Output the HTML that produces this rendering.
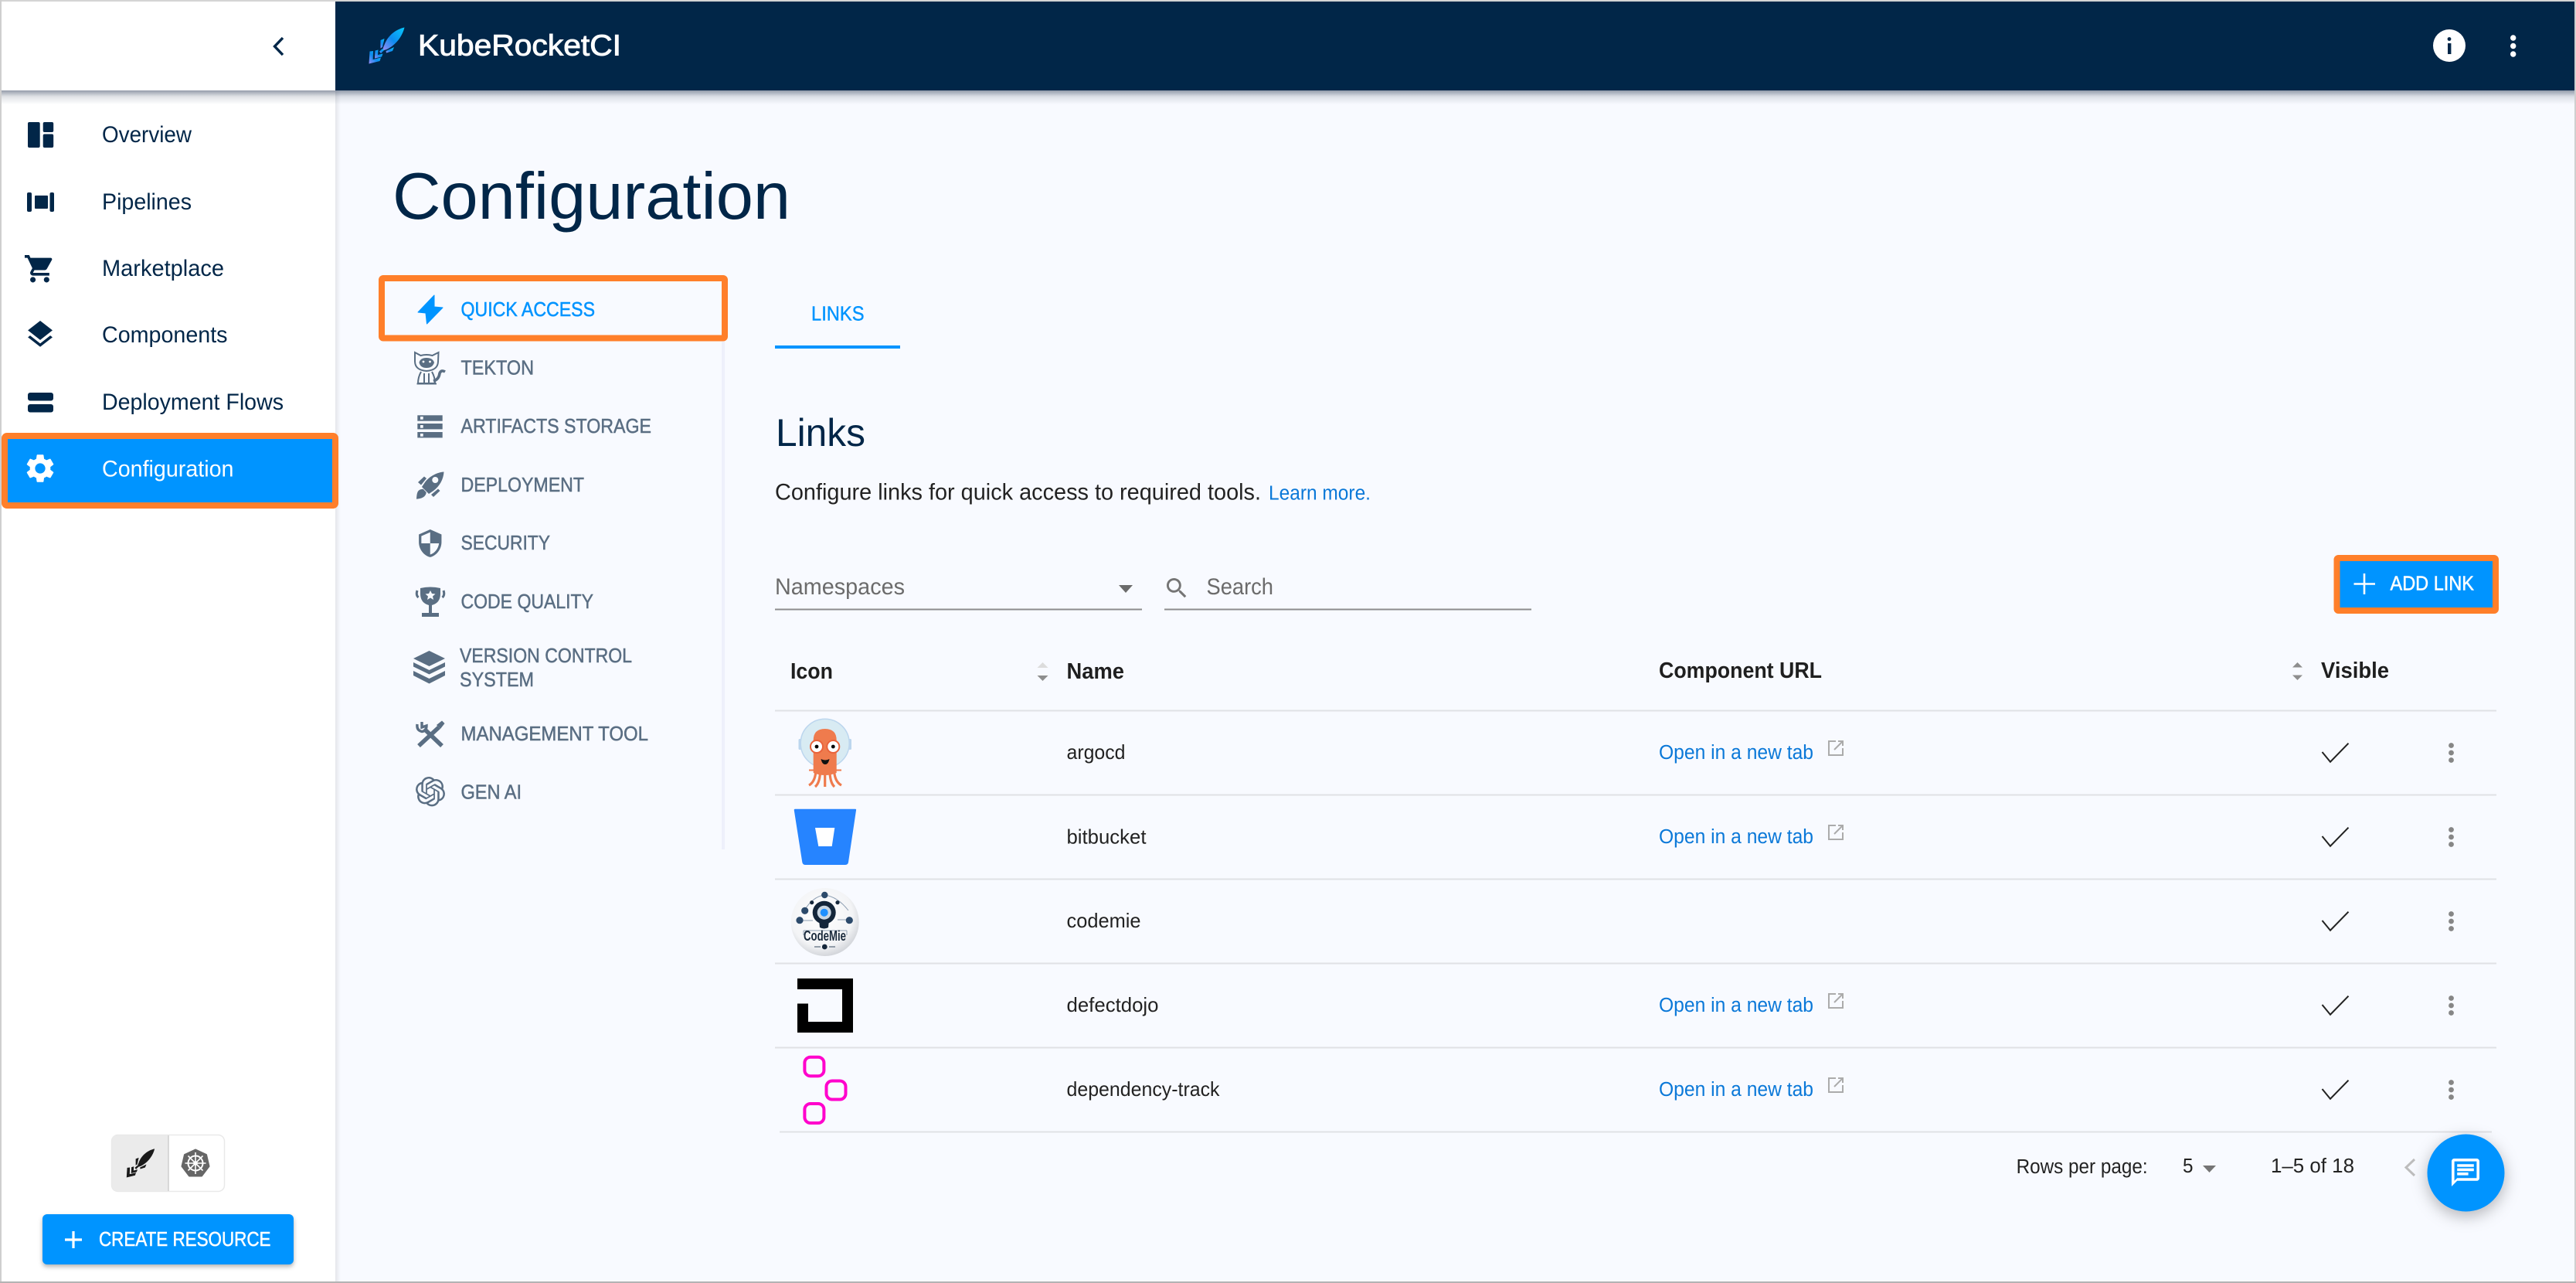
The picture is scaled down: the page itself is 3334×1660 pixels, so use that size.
<!DOCTYPE html>
<html lang="en">
<head>
<meta charset="utf-8">
<title>Configuration - KubeRocketCI</title>
<style>
html,body{margin:0;padding:0;width:3334px;height:1660px;overflow:hidden;background:#f8faff}
svg{display:block}
text{font-family:"Liberation Sans",sans-serif;white-space:pre}
.nav{font-size:29.8px;fill:#012648}
.sub{font-size:25.5px;fill:#5a6e83;stroke:#5a6e83;stroke-width:.5px}
.th{font-size:29px;font-weight:700;fill:#1f1f1f}
.td{font-size:26px;fill:#222}
.lnk{font-size:25.5px;fill:#0a78d8}
.pg{font-size:25.5px;fill:#222}
.btn{font-size:25.5px;fill:#fff;stroke:#fff;stroke-width:.5px}
.ic{fill:#5a6e83}
</style>
</head>
<body>
<svg xmlns="http://www.w3.org/2000/svg" width="3334" height="1660" viewBox="0 0 3334 1660">
<defs>
<linearGradient id="hs" x1="0" y1="0" x2="0" y2="1"><stop offset="0" stop-color="#2a3a55" stop-opacity=".5"/><stop offset=".45" stop-color="#2a3a55" stop-opacity=".14"/><stop offset="1" stop-color="#2a3a55" stop-opacity="0"/></linearGradient>
<linearGradient id="ss" x1="0" y1="0" x2="1" y2="0"><stop offset="0" stop-color="#000" stop-opacity=".08"/><stop offset="1" stop-color="#000" stop-opacity="0"/></linearGradient>
<linearGradient id="lg" x1="1" y1="0" x2="0" y2="1"><stop offset="0" stop-color="#08c8fb"/><stop offset=".55" stop-color="#0d8cf0"/><stop offset="1" stop-color="#9b8cf5"/></linearGradient>
<radialGradient id="cm" cx=".45" cy=".4" r=".65"><stop offset="0" stop-color="#fff"/><stop offset=".7" stop-color="#f3f4f6"/><stop offset="1" stop-color="#c9ccd2"/></radialGradient>
</defs>

<rect width="3334" height="1660" fill="#f8faff"/>

<!-- sidebar -->
<rect x="2" y="2" width="432" height="1656" fill="#fff"/>
<rect x="434" y="117" width="7" height="1541" fill="url(#ss)"/>
<!-- header shadow -->
<rect x="2" y="117" width="3330" height="18" fill="url(#hs)"/>
<!-- header -->
<rect x="2" y="2" width="432" height="115" fill="#fff"/>
<rect x="434" y="2" width="2898" height="115" fill="#012648"/>
<path d="M366 49 L355.5 60 L366 71" fill="none" stroke="#012648" stroke-width="3.4"/>

<!-- logo -->
<g fill="url(#lg)">
<path d="M523.5 35.5 C512 38 502 46 497.5 58 C496 61 495.5 63 495.5 65 C498 65 501 64 504 62 C514 56 521 46 523.5 35.5 Z"/>
<path d="M492.5 52 L497.5 50 L495 61 L492.5 62.5 Z"/>
<path d="M499.5 66 L510 61 L508 66 L500 68.5 Z"/>
<path d="M478.5 66.5 L483 66 L482.6 77 L493 74.5 L491.5 79 L477.5 82.5 Z"/>
<path d="M485.5 65.5 L489.5 64.5 L489 71 L495.5 69.5 L494 73.5 L485 75.5 Z"/>
<path d="M491 66.5 L495 63 L497 65 L493 69 Z"/>
</g>
<text x="541" y="71.5" font-size="38" fill="#fff" stroke="#fff" stroke-width=".9" textLength="263" lengthAdjust="spacingAndGlyphs">KubeRocketCI</text>

<!-- header right -->
<circle cx="3170" cy="59" r="21" fill="#fff"/>
<circle cx="3170" cy="50.5" r="2.4" fill="#012648"/>
<rect x="3168" y="56" width="4.4" height="14" fill="#012648"/>
<circle cx="3252.7" cy="49" r="3.7" fill="#fff"/><circle cx="3252.7" cy="59.5" r="3.7" fill="#fff"/><circle cx="3252.7" cy="70" r="3.7" fill="#fff"/>

<!-- sidebar nav icons -->
<g fill="#012648">
<rect x="36" y="158" width="15.7" height="33" rx="2"/><rect x="55.7" y="158" width="13.5" height="13" rx="2"/><rect x="55.7" y="173.5" width="13.5" height="17.5" rx="2"/>
<rect x="35" y="249" width="6" height="25" rx="2"/><rect x="45" y="253" width="17" height="17" rx="1"/><rect x="64.5" y="249" width="5.5" height="25" rx="2"/>
<path transform="translate(30.2 326.5) scale(1.77)" d="M7 18c-1.1 0-1.99.9-1.99 2S5.9 22 7 22s2-.9 2-2-.9-2-2-2zM1 2v2h2l3.6 7.59-1.35 2.45c-.16.28-.25.61-.25.96 0 1.1.9 2 2 2h12v-2H7.42c-.14 0-.25-.11-.25-.25l.03-.12.9-1.63h7.45c.75 0 1.41-.41 1.75-1.03l3.58-6.49c.08-.14.12-.31.12-.48 0-.55-.45-1-1-1H5.21l-.94-2H1zm16 16c-1.1 0-1.99.9-1.99 2s.89 2 1.99 2 2-.9 2-2-.9-2-2-2z"/>
<path transform="translate(30.8 411.5) scale(1.77)" d="M11.99 18.54l-7.37-5.73L3 14.07l9 7 9-7-1.63-1.27-7.38 5.74zM12 16l7.36-5.73L21 9l-9-7-9 7 1.63 1.27L12 16z"/>
<rect x="36" y="508" width="33" height="10.5" rx="3"/><rect x="36" y="523" width="33" height="10.5" rx="3"/>
</g>
<text class="nav" x="132" y="184" textLength="116" lengthAdjust="spacingAndGlyphs">Overview</text>
<text class="nav" x="132" y="271" textLength="116" lengthAdjust="spacingAndGlyphs">Pipelines</text>
<text class="nav" x="132" y="357" textLength="158" lengthAdjust="spacingAndGlyphs">Marketplace</text>
<text class="nav" x="132" y="443" textLength="162.5" lengthAdjust="spacingAndGlyphs">Components</text>
<text class="nav" x="132" y="530" textLength="235" lengthAdjust="spacingAndGlyphs">Deployment Flows</text>

<!-- selected config -->
<rect x="6" y="564" width="428" height="90" rx="3" fill="#0094ff" stroke="#ff7f2a" stroke-width="8"/>
<path transform="translate(29.8 583.8) scale(1.85)" fill="#fff" d="M19.14 12.94c.04-.3.06-.61.06-.94 0-.32-.02-.64-.07-.94l2.03-1.58c.18-.14.23-.41.12-.61l-1.92-3.32c-.12-.22-.37-.29-.59-.22l-2.39.96c-.5-.38-1.03-.7-1.62-.94l-.36-2.54c-.04-.24-.24-.41-.48-.41h-3.84c-.24 0-.43.17-.47.41l-.36 2.54c-.59.24-1.13.57-1.62.94l-2.39-.96c-.22-.08-.47 0-.59.22L2.74 8.87c-.12.21-.08.47.12.61l2.03 1.58c-.05.3-.09.63-.09.94s.02.64.07.94l-2.03 1.58c-.18.14-.23.41-.12.61l1.92 3.32c.12.22.37.29.59.22l2.39-.96c.5.38 1.03.7 1.62.94l.36 2.54c.05.24.24.41.48.41h3.84c.24 0 .44-.17.47-.41l.36-2.54c.59-.24 1.13-.56 1.62-.94l2.39.96c.22.08.47 0 .59-.22l1.92-3.32c.12-.22.07-.47-.12-.61l-2.01-1.58zM12 15.6c-1.98 0-3.6-1.62-3.6-3.6s1.62-3.6 3.6-3.6 3.6 1.62 3.6 3.6-1.62 3.6-3.6 3.6z"/>
<text class="nav" x="132" y="616.5" style="fill:#fff" textLength="170.5" lengthAdjust="spacingAndGlyphs">Configuration</text>

<!-- env toggle -->
<rect x="144.5" y="1468.5" width="146" height="73" rx="8" fill="#fff" stroke="#e9e9e9" stroke-width="1.5"/>
<path d="M152 1469 H218 V1541 H152 Q145 1541 145 1534 V1476 Q145 1469 152 1469 Z" fill="#ebebeb"/>
<path d="M218 1469 V1541" stroke="#cfcfcf" stroke-width="1.5"/>
<g transform="translate(163 1486) scale(.79) translate(-476.5 -35)" fill="#1a1a1a">
<path d="M523.5 35.5 C512 38 502 46 497.5 58 C496 61 495.5 63 495.5 65 C498 65 501 64 504 62 C514 56 521 46 523.5 35.5 Z"/>
<path d="M492.5 52 L497.5 50 L495 61 L492.5 62.5 Z"/>
<path d="M499.5 66 L510 61 L508 66 L500 68.5 Z"/>
<path d="M478.5 66.5 L483 66 L482.6 77 L493 74.5 L491.5 79 L477.5 82.5 Z"/>
<path d="M485.5 65.5 L489.5 64.5 L489 71 L495.5 69.5 L494 73.5 L485 75.5 Z"/>
<path d="M491 66.5 L495 63 L497 65 L493 69 Z"/>
</g>
<polygon points="253,1487.5 267,1494 270.5,1509 261,1521.5 245,1521.5 235.5,1509 239,1494" fill="#666" stroke="#666" stroke-width="2" stroke-linejoin="round"/>
<g stroke="#fff" fill="none">
<circle cx="253" cy="1505" r="9.5" stroke-width="2"/>
<path stroke-width="1.6" d="M253 1491 V1519 M239.5 1505 H266.5 M243.5 1495.5 L262.5 1514.5 M262.5 1495.5 L243.5 1514.5"/>
</g>
<circle cx="253" cy="1505" r="2.8" fill="#fff"/>

<!-- create resource -->
<rect x="55" y="1571" width="325" height="65" rx="6" fill="#0094ff" style="filter:drop-shadow(0 3px 3px rgba(0,0,0,.3))"/>
<path d="M84 1604 H106 M95 1593 V1615" stroke="#fff" stroke-width="3.2"/>
<text class="btn" x="128" y="1612" textLength="222.5" lengthAdjust="spacingAndGlyphs">CREATE RESOURCE</text>

<!-- page title -->
<text x="508" y="283" font-size="85" fill="#012648" textLength="515" lengthAdjust="spacingAndGlyphs">Configuration</text>

<!-- sub nav -->
<rect x="934" y="442" width="4" height="657" fill="#eef0fb"/>
<rect x="494" y="360" width="444" height="77.5" rx="2" fill="none" stroke="#ff7f2a" stroke-width="8"/>
<path d="M562 382 L541 404 L551 405 L552.5 419 L573 398 L562 397 Z" fill="#0094ff" stroke="#0094ff" stroke-width="1" stroke-linejoin="round"/>
<text class="sub" x="596.5" y="409" style="fill:#0094ff;stroke:#0094ff" textLength="173.5" lengthAdjust="spacingAndGlyphs">QUICK ACCESS</text>

<!-- tekton cat -->
<g fill="none" stroke="#5a6e83" stroke-width="2">
<path d="M537 456 L544.5 460 Q552 458 559.5 460 L567.5 456 L567 468 Q566.5 479 552 480 Q537.5 479 537 468 Z"/>
<path d="M559 481 Q563 488 563 496 H541 Q541 488 545 481"/>
<path d="M539.5 496.5 H565 M549 483 V496 M555 483 V496"/>
<path d="M561 493 Q568 491 569 483 Q571 478 576 481" stroke-width="3.6"/>
</g>
<path d="M542.5 469 Q544 463 552 463 Q560 463 562 469 Q560 476 552 476 Q544 476 542.5 469 Z" fill="#5a6e83"/>
<circle cx="548" cy="468" r="1.4" fill="#fff"/><circle cx="556.5" cy="468" r="1.4" fill="#fff"/>
<text class="sub" x="596.5" y="484.5" textLength="94.5" lengthAdjust="spacingAndGlyphs">TEKTON</text>

<!-- artifacts -->
<g class="ic">
<rect x="540.3" y="537.3" width="32.4" height="7.4"/><rect x="540.3" y="548" width="32.4" height="7.4"/><rect x="540.3" y="559" width="32.4" height="7.4"/>
</g>
<g fill="#f8faff"><rect x="544" y="539" width="3.7" height="3.7"/><rect x="544" y="550" width="3.7" height="3.7"/><rect x="544" y="561" width="3.7" height="3.7"/></g>
<text class="sub" x="596.5" y="560" textLength="246.5" lengthAdjust="spacingAndGlyphs">ARTIFACTS STORAGE</text>

<!-- rocket -->
<path class="ic" fill-rule="evenodd" d="M574.5 610.5 C566 611 556 616 550 624 L546 630 L555 639 L561 635 C569 629 574 620 574.5 610.5 Z M563.3 617 a4 4 0 1 0 .01 0 Z"/>
<path class="ic" d="M541 624 L549 616.5 L552 619 L545 627.5 Z"/>
<path class="ic" d="M558 640 L567 632.5 L569.5 635 L561 643 Z"/>
<path class="ic" d="M539 645.7 C539.5 636 541 633 547.7 632.7 L551.7 637 C551 643 546 645 539 645.7 Z"/>
<text class="sub" x="596.5" y="636" textLength="159.5" lengthAdjust="spacingAndGlyphs">DEPLOYMENT</text>

<!-- shield -->
<path class="ic" transform="translate(537.2 683.4) scale(1.63)" d="M12 1L3 5v6c0 5.55 3.84 10.74 9 12 5.16-1.26 9-6.45 9-12V5l-9-4zm0 10.99h7c-.53 4.12-3.28 7.79-7 8.94V12H5V6.3l7-3.11v8.8z"/>
<text class="sub" x="596.5" y="711" textLength="115.5" lengthAdjust="spacingAndGlyphs">SECURITY</text>

<!-- trophy -->
<path class="ic" d="M544 761 Q557 758 570 761 V768 Q570 780 559 783 V793 H568 V798 H546 V793 H555 V783 Q544 780 544 768 Z"/>
<path d="M557 764 L559 768 L563.5 768.5 L560 771.5 L561 776 L557 773.5 L553 776 L554 771.5 L550.5 768.5 L555 768 Z" fill="#f8faff"/>
<path d="M540 764 Q538 770 541.5 773 M574 764 Q576 770 572.5 773" fill="none" stroke="#5a6e83" stroke-width="3"/>
<text class="sub" x="596.5" y="787" textLength="171.5" lengthAdjust="spacingAndGlyphs">CODE QUALITY</text>

<!-- vcs layers -->
<g class="ic">
<path d="M555.5 842 L576 852 L555.5 862 L535 852 Z"/>
<path d="M535 857 L555.5 867 L576 857 V862.5 L555.5 872.5 L535 862.5 Z"/>
<path d="M535 868 L555.5 878 L576 868 V874 L555.5 884.5 L535 874 Z"/>
</g>
<text class="sub" x="595" y="857" textLength="223" lengthAdjust="spacingAndGlyphs">VERSION CONTROL</text>
<text class="sub" x="595" y="888" textLength="96" lengthAdjust="spacingAndGlyphs">SYSTEM</text>

<!-- tools -->
<g fill="none" stroke="#5a6e83">
<path d="M549 943 L572 965" stroke-width="5.5"/>
<path d="M568 941 L542 965" stroke-width="5.5"/>
<path d="M540 937 Q539 945 546 946.5 Q552 946 552 939 L546 941 L546 934" stroke-width="3.4"/>
</g>
<path class="ic" d="M565 938 L572 932.5 L575.5 936 L570 943 Z"/>
<text class="sub" x="596.5" y="958" textLength="242.5" lengthAdjust="spacingAndGlyphs">MANAGEMENT TOOL</text>

<!-- gen ai -->
<path class="ic" transform="translate(537.8 1005) scale(1.6)" d="M22.2819 9.8211a5.9847 5.9847 0 0 0-.5157-4.9108 6.0462 6.0462 0 0 0-6.5098-2.9A6.0651 6.0651 0 0 0 4.9807 4.1818a5.9847 5.9847 0 0 0-3.9977 2.9 6.0462 6.0462 0 0 0 .7427 7.0966 5.98 5.98 0 0 0 .511 4.9107 6.051 6.051 0 0 0 6.5146 2.9001A5.9847 5.9847 0 0 0 13.2599 24a6.0557 6.0557 0 0 0 5.7718-4.2058 5.9894 5.9894 0 0 0 3.9977-2.9001 6.0557 6.0557 0 0 0-.7475-7.0729zm-9.022 12.6081a4.4755 4.4755 0 0 1-2.8764-1.0408l.1419-.0804 4.7783-2.7582a.7948.7948 0 0 0 .3927-.6813v-6.7369l2.02 1.1686a.071.071 0 0 1 .038.052v5.5826a4.504 4.504 0 0 1-4.4945 4.4944zm-9.6607-4.1254a4.4708 4.4708 0 0 1-.5346-3.0137l.142.0852 4.783 2.7582a.7712.7712 0 0 0 .7806 0l5.8428-3.3685v2.3324a.0804.0804 0 0 1-.0332.0615L9.74 19.9502a4.4992 4.4992 0 0 1-6.1408-1.6464zM2.3408 7.8956a4.485 4.485 0 0 1 2.3655-1.9728V11.6a.7664.7664 0 0 0 .3879.6765l5.8144 3.3543-2.0201 1.1685a.0757.0757 0 0 1-.071 0l-4.8303-2.7865A4.504 4.504 0 0 1 2.3408 7.872zm16.5963 3.8558L13.1038 8.364 15.1192 7.2a.0757.0757 0 0 1 .071 0l4.8303 2.7913a4.4944 4.4944 0 0 1-.6765 8.1042v-5.6772a.79.79 0 0 0-.407-.667zm2.0107-3.0231l-.142-.0852-4.7735-2.7818a.7759.7759 0 0 0-.7854 0L9.409 9.2297V6.8974a.0662.0662 0 0 1 .0284-.0615l4.8303-2.7866a4.4992 4.4992 0 0 1 6.6802 4.66zM8.3065 12.863l-2.02-1.1638a.0804.0804 0 0 1-.038-.0567V6.0742a4.4992 4.4992 0 0 1 7.3757-3.4537l-.142.0805L8.704 5.459a.7948.7948 0 0 0-.3927.6813zm1.0976-2.3654l2.602-1.4998 2.6069 1.4998v2.9994l-2.5974 1.4997-2.6067-1.4997Z"/>
<text class="sub" x="596.5" y="1033.5" textLength="78.5" lengthAdjust="spacingAndGlyphs">GEN AI</text>

<!-- tab -->
<text x="1050" y="414.5" font-size="25.5" fill="#0094ff" stroke="#0094ff" stroke-width=".4" textLength="68.6" lengthAdjust="spacingAndGlyphs">LINKS</text>
<rect x="1003" y="447" width="162" height="4" fill="#0094ff"/>

<text x="1004" y="577" font-size="50" fill="#012648" textLength="116" lengthAdjust="spacingAndGlyphs">Links</text>
<text x="1003" y="646.5" font-size="29.8" fill="#222" textLength="629" lengthAdjust="spacingAndGlyphs">Configure links for quick access to required tools.</text>
<text class="lnk" x="1642" y="646.5" textLength="132" lengthAdjust="spacingAndGlyphs">Learn more.</text>

<!-- filters -->
<text x="1003" y="769" font-size="29.8" fill="#6b6b6b" textLength="168" lengthAdjust="spacingAndGlyphs">Namespaces</text>
<path d="M1448 757 H1466 L1457 767 Z" fill="#6b6b6b"/>
<rect x="1003" y="787.5" width="475" height="2" fill="#8c8c8c"/>
<path fill="#757575" transform="translate(1505.6 743.6) scale(1.45)" d="M15.5 14h-.79l-.28-.27C15.41 12.59 16 11.11 16 9.5 16 5.91 13.09 3 9.5 3S3 5.91 3 9.5 5.91 16 9.5 16c1.61 0 3.09-.59 4.23-1.57l.27.28v.79l5 4.99L20.49 19l-4.99-5zm-6 0C7.01 14 5 11.99 5 9.5S7.01 5 9.5 5 14 7.01 14 9.5 11.99 14 9.5 14z"/>
<text x="1561.5" y="769" font-size="29.8" fill="#6b6b6b" textLength="86.5" lengthAdjust="spacingAndGlyphs">Search</text>
<rect x="1507" y="787.5" width="475" height="2" fill="#8c8c8c"/>

<!-- add link -->
<rect x="3024.5" y="722" width="205.5" height="68" rx="2" fill="#0094ff" stroke="#ff7f2a" stroke-width="8"/>
<path d="M3046.5 755.5 H3074 M3060 742 V769" stroke="#fff" stroke-width="2.6"/>
<text class="btn" x="3093.5" y="763.5" textLength="108.5" lengthAdjust="spacingAndGlyphs">ADD LINK</text>

<!-- table head -->
<text class="th" x="1023" y="878" textLength="55" lengthAdjust="spacingAndGlyphs">Icon</text>
<text class="th" x="1380.5" y="878" textLength="74.5" lengthAdjust="spacingAndGlyphs">Name</text>
<text class="th" x="2147" y="877" textLength="211" lengthAdjust="spacingAndGlyphs">Component URL</text>
<text class="th" x="3004" y="877" textLength="88" lengthAdjust="spacingAndGlyphs">Visible</text>
<path d="M1342.5 864 L1349.5 857 L1356.5 864 Z" fill="#dcdcdc"/>
<path d="M1342.5 874 L1349.5 881 L1356.5 874 Z" fill="#8e8e8e"/>
<path d="M2967 863.5 L2973.5 857 L2980 863.5 Z" fill="#8e8e8e"/>
<path d="M2967 873.5 L2973.5 880 L2980 873.5 Z" fill="#8e8e8e"/>

<!-- table rows lines -->
<g fill="#e0e1e5">
<rect x="1003" y="918.5" width="2228" height="2"/>
<rect x="1003" y="1027.5" width="2228" height="2"/>
<rect x="1003" y="1136.5" width="2228" height="2"/>
<rect x="1003" y="1245.5" width="2228" height="2"/>
<rect x="1003" y="1354.5" width="2228" height="2"/>
<rect x="1009" y="1463.5" width="2216" height="2"/>
</g>

<!-- row names -->
<text class="td" x="1380.5" y="982" textLength="76" lengthAdjust="spacingAndGlyphs">argocd</text>
<text class="td" x="1380.5" y="1091.5" textLength="103" lengthAdjust="spacingAndGlyphs">bitbucket</text>
<text class="td" x="1380.5" y="1200" textLength="96" lengthAdjust="spacingAndGlyphs">codemie</text>
<text class="td" x="1380.5" y="1309" textLength="119" lengthAdjust="spacingAndGlyphs">defectdojo</text>
<text class="td" x="1380.5" y="1418" textLength="198" lengthAdjust="spacingAndGlyphs">dependency-track</text>

<!-- links -->
<text class="lnk" x="2147" y="982" textLength="200" lengthAdjust="spacingAndGlyphs">Open in a new tab</text>
<text class="lnk" x="2147" y="1091" textLength="200" lengthAdjust="spacingAndGlyphs">Open in a new tab</text>
<text class="lnk" x="2147" y="1309" textLength="200" lengthAdjust="spacingAndGlyphs">Open in a new tab</text>
<text class="lnk" x="2147" y="1418" textLength="200" lengthAdjust="spacingAndGlyphs">Open in a new tab</text>
<g fill="none" stroke="#ababab" stroke-width="2">
<g><path d="M2376 959 H2367 V977 H2385 V968"/><path d="M2374 970 L2385 959 M2379 959 H2385 V965"/></g>
<g transform="translate(0 109)"><path d="M2376 959 H2367 V977 H2385 V968"/><path d="M2374 970 L2385 959 M2379 959 H2385 V965"/></g>
<g transform="translate(0 327)"><path d="M2376 959 H2367 V977 H2385 V968"/><path d="M2374 970 L2385 959 M2379 959 H2385 V965"/></g>
<g transform="translate(0 436)"><path d="M2376 959 H2367 V977 H2385 V968"/><path d="M2374 970 L2385 959 M2379 959 H2385 V965"/></g>
</g>

<!-- checks -->
<g fill="none" stroke="#222" stroke-width="2">
<path d="M3005.5 973 L3016 985.7 L3039.5 961.7"/>
<path d="M3005.5 1082 L3016 1094.7 L3039.5 1070.7"/>
<path d="M3005.5 1191 L3016 1203.7 L3039.5 1179.7"/>
<path d="M3005.5 1300 L3016 1312.7 L3039.5 1288.7"/>
<path d="M3005.5 1409 L3016 1421.7 L3039.5 1397.7"/>
</g>

<!-- kebabs -->
<g fill="#868686">
<circle cx="3172.5" cy="964.5" r="3.4"/><circle cx="3172.5" cy="974" r="3.4"/><circle cx="3172.5" cy="983.5" r="3.4"/>
<circle cx="3172.5" cy="1073.5" r="3.4"/><circle cx="3172.5" cy="1083" r="3.4"/><circle cx="3172.5" cy="1092.5" r="3.4"/>
<circle cx="3172.5" cy="1182.5" r="3.4"/><circle cx="3172.5" cy="1192" r="3.4"/><circle cx="3172.5" cy="1201.5" r="3.4"/>
<circle cx="3172.5" cy="1291.5" r="3.4"/><circle cx="3172.5" cy="1301" r="3.4"/><circle cx="3172.5" cy="1310.5" r="3.4"/>
<circle cx="3172.5" cy="1400.5" r="3.4"/><circle cx="3172.5" cy="1410" r="3.4"/><circle cx="3172.5" cy="1419.5" r="3.4"/>
</g>

<!-- argo icon -->
<rect x="1033.5" y="956" width="4" height="14" rx="1.5" fill="#bcd6ee"/>
<rect x="1098" y="956" width="4" height="14" rx="1.5" fill="#bcd6ee"/>
<circle cx="1067.7" cy="961.7" r="31.5" fill="#d8ebf3" stroke="#bcd6ee" stroke-width="1.5"/>
<g stroke="#ef7b4d" stroke-width="3.2" fill="none">
<path d="M1056 994 Q1056 1011 1047 1016"/>
<path d="M1061.5 994 Q1062 1012 1055 1018"/>
<path d="M1067.7 994 V1018"/>
<path d="M1074 994 Q1073.5 1012 1080 1018"/>
<path d="M1079.5 994 Q1079.5 1011 1089 1016"/>
<path d="M1047 996.5 H1089" stroke-width="2"/>
</g>
<path d="M1052.7 958 Q1052.7 943 1067.7 943 Q1082.7 943 1082.7 958 V1000 Q1067.7 1006 1052.7 1000 Z" fill="#ef7b4d"/>
<circle cx="1057" cy="966" r="8" fill="#fff" stroke="#e9633b" stroke-width="2"/>
<circle cx="1078.3" cy="966" r="8" fill="#fff" stroke="#e9633b" stroke-width="2"/>
<circle cx="1057" cy="966" r="2.4" fill="#000"/><circle cx="1078.3" cy="966" r="2.4" fill="#000"/>
<path d="M1062.5 982 Q1068 985 1073.5 982 Q1072 989 1068 989 Q1064 989 1062.5 982 Z" fill="#111"/>

<!-- bitbucket icon -->
<path d="M1029 1046.7 H1107 Q1108.5 1046.7 1108 1048.5 L1098 1115.5 Q1097.5 1119 1094 1119 H1042 Q1039 1119 1038.3 1115.5 L1027.8 1048.5 Q1027.5 1046.7 1029 1046.7 Z" fill="#2684ff"/>
<path d="M1055 1071 H1080.3 L1076.7 1095 H1059.3 Z" fill="#fff"/>

<!-- codemie icon -->
<circle cx="1067.7" cy="1193" r="44" fill="url(#cm)"/>
<g fill="none" stroke="#8fa0b3" stroke-width="1">
<path d="M1041 1178 Q1052 1160 1067 1158 Q1084 1160 1098 1178"/>
<path d="M1036 1191 H1052 M1084 1190 H1099 M1040 1204 H1096 M1040 1204 V1210 M1096 1204 V1210"/>
</g>
<circle cx="1067.3" cy="1158" r="4.2" fill="#2c4a6b"/>
<circle cx="1050.7" cy="1167.7" r="2.6" fill="#14263a"/>
<circle cx="1084" cy="1167.7" r="2.6" fill="#14263a"/>
<circle cx="1041.7" cy="1178.3" r="4.6" fill="#2c4a6b"/>
<circle cx="1035" cy="1190.7" r="4.6" fill="#2c4a6b"/>
<circle cx="1099.3" cy="1190.7" r="4.6" fill="#2c4a6b"/>
<circle cx="1067.3" cy="1225" r="3.4" fill="#14263a"/>
<path d="M1054 1225 H1062 M1073 1225 H1081" stroke="#5c6c7e" stroke-width="1.2"/>
<circle cx="1066.7" cy="1180.7" r="15" fill="#14263a"/>
<path d="M1060 1190 H1073 L1072 1200 Q1066.7 1203 1061 1200 Z" fill="#14263a"/>
<circle cx="1066.7" cy="1180.7" r="9" fill="#c9d6e2"/>
<circle cx="1066.7" cy="1180.7" r="5" fill="#1e90ff"/>
<text x="1040" y="1217" font-size="18" font-weight="700" fill="#1a2a3c" textLength="55" lengthAdjust="spacingAndGlyphs">CodeMie</text>

<!-- defectdojo icon -->
<path d="M1032 1266 H1104 V1336 H1032 V1298.5 H1046 V1322 H1090 V1280 H1032 Z" fill="#000"/>

<!-- dependency track icon -->
<g fill="none" stroke="#ff00cc" stroke-width="4">
<rect x="1041.4" y="1367.7" width="25" height="24.5" rx="7.5"/>
<rect x="1069.5" y="1398.5" width="25" height="24" rx="7.5"/>
<rect x="1041.4" y="1428" width="25" height="25" rx="7.5"/>
</g>

<!-- pagination -->
<text class="pg" x="2609.6" y="1518" textLength="170" lengthAdjust="spacingAndGlyphs">Rows per page:</text>
<text class="pg" x="2825" y="1517" textLength="13.5" lengthAdjust="spacingAndGlyphs">5</text>
<path d="M2851 1508 H2868 L2859.5 1517 Z" fill="#757575"/>
<text class="pg" x="2939" y="1517" textLength="108" lengthAdjust="spacingAndGlyphs">1–5 of 18</text>
<path d="M3125 1500 L3114 1510.5 L3125 1521" fill="none" stroke="#bdbdbd" stroke-width="3"/>

<!-- fab -->
<circle cx="3191.5" cy="1517.5" r="50" fill="#0094ff" style="filter:drop-shadow(0 6px 10px rgba(0,0,0,.28))"/>
<path fill="#fff" transform="translate(3169.4 1495.4) scale(1.8)" d="M20 2H4c-1.1 0-2 .9-2 2v18l4-4h14c1.1 0 2-.9 2-2V4c0-1.1-.9-2-2-2zm0 14H6l-2 2V4h16v12zM6 12h8v2H6zM6 9h12v2H6zM6 6h12v2H6z"/>

<!-- outer border -->
<rect x="0" y="0" width="3334" height="2" fill="#d4d4d4"/>
<rect x="0" y="0" width="2" height="1660" fill="#cfcfcf"/>
<rect x="3332" y="0" width="2" height="1660" fill="#cfcfcf"/>
<rect x="0" y="1658" width="3334" height="2" fill="#b3b3b3"/>
</svg>
</body>
</html>
